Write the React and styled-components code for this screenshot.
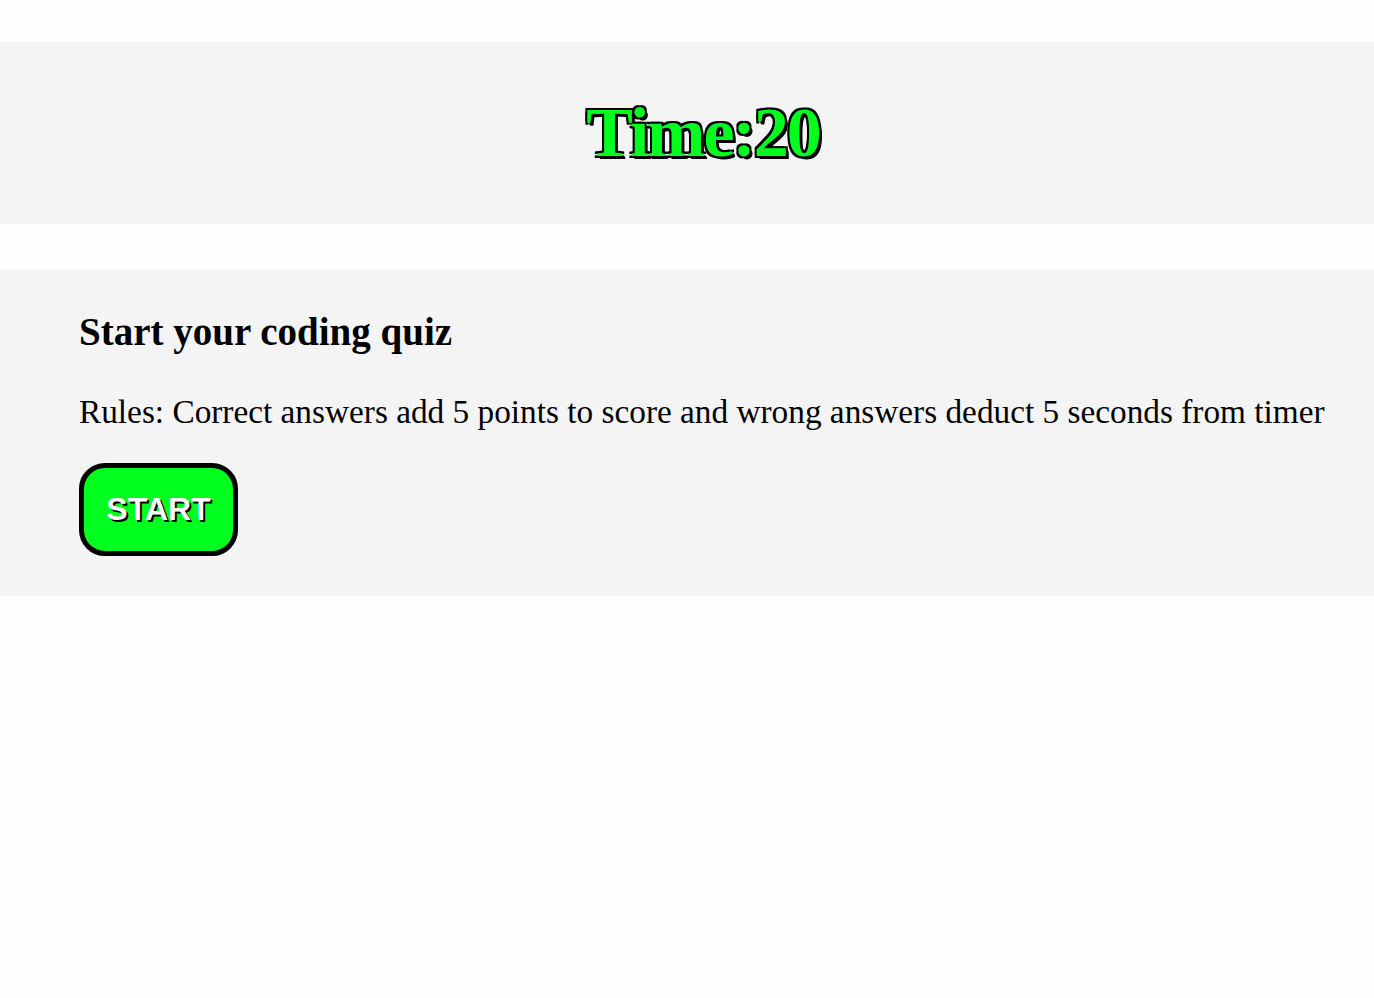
import React from "react";
import styled, { createGlobalStyle } from "styled-components";

const Global = createGlobalStyle`
  html, body { margin: 0; padding: 0; background: #fefefe; }
  body { font-family: "Liberation Serif", "Times New Roman", serif; color: #000; }
`;

const Page = styled.div`
  padding-top: 42px;
  display: flex;
  flex-direction: column;
  gap: 45px;
`;

const Header = styled.header`
  height: 182px;
  background: #f4f4f4;
  display: flex;
  align-items: center;
  justify-content: center;
  padding-left: 32px;
`;

const Timer = styled.h1`
  margin: 0;
  font-size: 70px;
  font-weight: bold;
  letter-spacing: -2px;
  color: #00ff1f;
  text-shadow: 3px 3px 0 #000, -2px -2px 0 #000, 2px -2px 0 #000, -2px 2px 0 #000, 2px 2px 0 #000;
`;

const Card = styled.section`
  height: 327px;
  box-sizing: border-box;
  background: #f4f4f4;
  padding: 40px 20px 0 79px;
`;

const Title = styled.h2`
  margin: 0;
  font-size: 39px;
  font-weight: bold;
  line-height: 1.2;
`;

const Rules = styled.p`
  margin: 37px 0 0;
  font-size: 33.3px;
  line-height: 1.15;
  white-space: nowrap;
`;

const StartButton = styled.button`
  margin-top: 32px;
  width: 159px;
  height: 93px;
  box-sizing: border-box;
  border: 5px solid #000;
  border-radius: 26px;
  background: #00ff1f;
  font-family: "Liberation Sans", Arial, sans-serif;
  font-weight: bold;
  font-size: 32px;
  color: #fff;
  text-shadow: 2px 2px 0 #000;
  padding: 0;
  cursor: pointer;
`;

export default function App() {
  return (
    <>
      <Global />
      <Page>
        <Header>
          <Timer>Time:20</Timer>
        </Header>
        <Card>
          <Title>Start your coding quiz</Title>
          <Rules>Rules: Correct answers add 5 points to score and wrong answers deduct 5 seconds from timer</Rules>
          <StartButton>START</StartButton>
        </Card>
      </Page>
    </>
  );
}
